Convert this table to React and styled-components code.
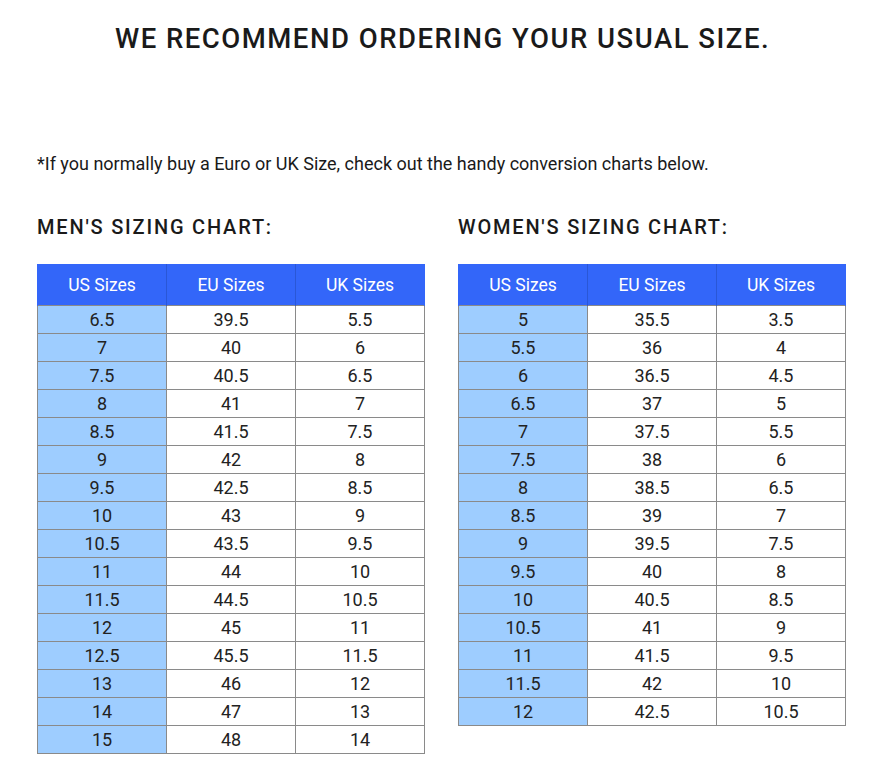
import React from 'react'
import styled, { createGlobalStyle } from 'styled-components'

const GlobalStyle = createGlobalStyle`
    body {
        margin: 0;
        background: #ffffff;
        font-family: Roboto, "Liberation Sans", sans-serif;
        color: #1a1a1a;
    }
`

const Page = styled.div`
    width: 877px;
    padding: 22px 0 20px;
    box-sizing: border-box;
`

const Title = styled.h1`
    margin: 0;
    text-align: center;
    font-size: 27.5px;
    font-weight: 500;
    letter-spacing: 1.5px;
    line-height: 34px;
    color: #1a1a1a;
    padding-left: 8px;
`

const Note = styled.p`
    margin: 96px 0 0 37px;
    font-size: 18px;
    line-height: 23px;
    color: #1a1a1a;
`

const Charts = styled.div`
    display: flex;
    gap: 34px;
    margin: 39px 0 0 37px;
`

const Chart = styled.section`
    width: 387px;
`

const ChartTitle = styled.h2`
    margin: 0 0 24px;
    font-size: 20px;
    font-weight: 500;
    letter-spacing: 1.8px;
    line-height: 26px;
`

const Table = styled.table`
    border-collapse: collapse;
    width: 388px;
    table-layout: fixed;
`

const Head = styled.th`
    background: #3366f9;
    color: #ffffff;
    font-weight: 400;
    font-size: 17.5px;
    height: 41px;
    padding: 0;
    border-left: 1px solid #2a57d6;
    border-right: 1px solid #2a57d6;
    &:first-child { border-left-color: #3366f9; }
    &:last-child { border-right-color: #3366f9; }
`

const Cell = styled.td`
    height: 27px;
    padding: 0;
    text-align: center;
    font-size: 18px;
    color: #222222;
    border: 1px solid #8a8a8a;
    background: ${p => (p.$first ? '#9ecdff' : '#ffffff')};
`

const headers = ['US Sizes', 'EU Sizes', 'UK Sizes']

const mens = [
    ['6.5', '39.5', '5.5'],
    ['7', '40', '6'],
    ['7.5', '40.5', '6.5'],
    ['8', '41', '7'],
    ['8.5', '41.5', '7.5'],
    ['9', '42', '8'],
    ['9.5', '42.5', '8.5'],
    ['10', '43', '9'],
    ['10.5', '43.5', '9.5'],
    ['11', '44', '10'],
    ['11.5', '44.5', '10.5'],
    ['12', '45', '11'],
    ['12.5', '45.5', '11.5'],
    ['13', '46', '12'],
    ['14', '47', '13'],
    ['15', '48', '14'],
]

const womens = [
    ['5', '35.5', '3.5'],
    ['5.5', '36', '4'],
    ['6', '36.5', '4.5'],
    ['6.5', '37', '5'],
    ['7', '37.5', '5.5'],
    ['7.5', '38', '6'],
    ['8', '38.5', '6.5'],
    ['8.5', '39', '7'],
    ['9', '39.5', '7.5'],
    ['9.5', '40', '8'],
    ['10', '40.5', '8.5'],
    ['10.5', '41', '9'],
    ['11', '41.5', '9.5'],
    ['11.5', '42', '10'],
    ['12', '42.5', '10.5'],
]

const SizeChart = ({ title, rows }) => (
    <Chart>
        <ChartTitle>{title}</ChartTitle>
        <Table>
            <thead>
                <tr>
                    {headers.map(h => <Head key={h}>{h}</Head>)}
                </tr>
            </thead>
            <tbody>
                {rows.map(row => (
                    <tr key={row[0]}>
                        {row.map((v, i) => <Cell key={i} $first={i === 0}>{v}</Cell>)}
                    </tr>
                ))}
            </tbody>
        </Table>
    </Chart>
)

export default function App() {
    return (
        <Page>
            <GlobalStyle />
            <Title>WE RECOMMEND ORDERING YOUR USUAL SIZE.</Title>
            <Note>*If you normally buy a Euro or UK Size, check out the handy conversion charts below.</Note>
            <Charts>
                <SizeChart title="MEN'S SIZING CHART:" rows={mens} />
                <SizeChart title="WOMEN'S SIZING CHART:" rows={womens} />
            </Charts>
        </Page>
    )
}
